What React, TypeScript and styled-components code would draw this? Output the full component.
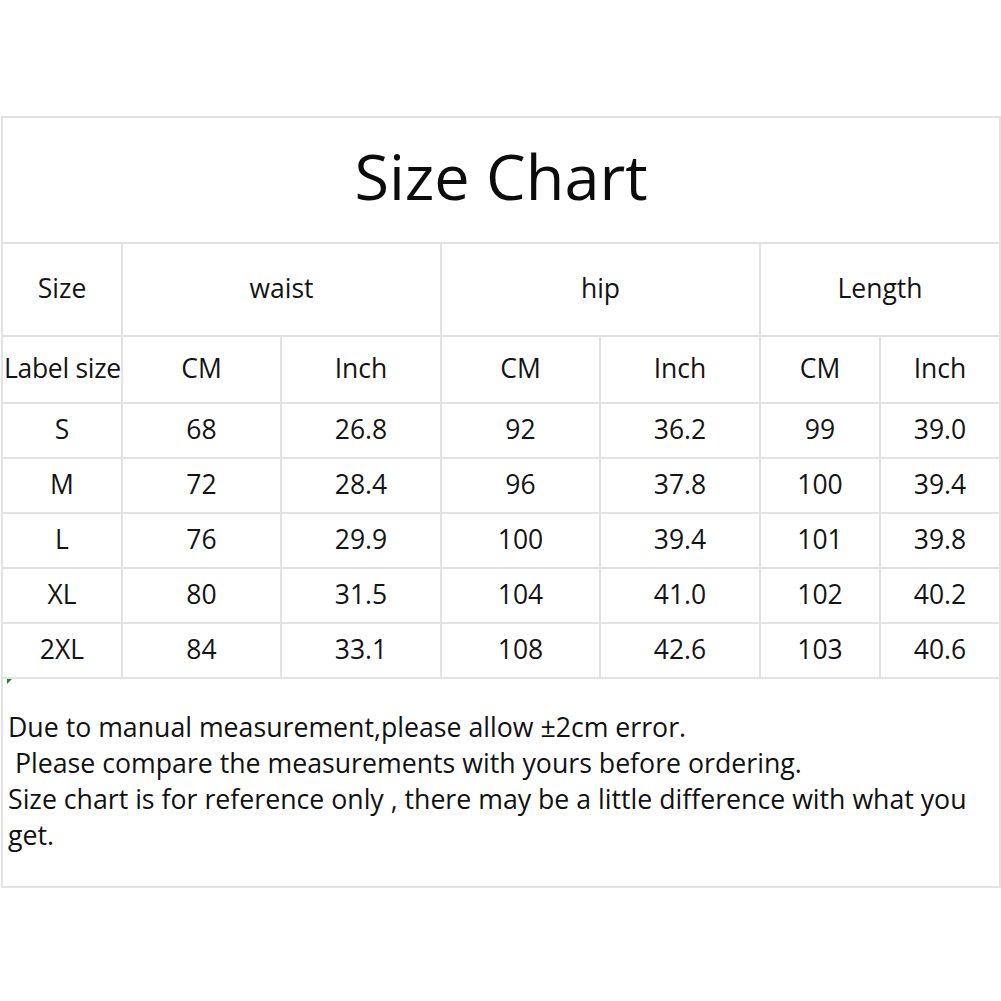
import React from "react";
import styled, { createGlobalStyle } from "styled-components";

const GlobalStyle = createGlobalStyle`
    html, body {
        margin: 0;
        padding: 0;
        background: #ffffff;
    }
    body {
        font-family: "Open Sans", "Noto Sans", sans-serif;
        color: #111111;
    }
`;

const rows = [
    ["S", "68", "26.8", "92", "36.2", "99", "39.0"],
    ["M", "72", "28.4", "96", "37.8", "100", "39.4"],
    ["L", "76", "29.9", "100", "39.4", "101", "39.8"],
    ["XL", "80", "31.5", "104", "41.0", "102", "40.2"],
    ["2XL", "84", "33.1", "108", "42.6", "103", "40.6"],
];

const colWidths = [120, 159, 160, 159, 160, 120, 120];

const App = () => {
    return (
        <Page>
            <GlobalStyle />
            <Chart>
                <colgroup>
                    {colWidths.map((w, i) => (
                        <col key={i} style={{ width: w }} />
                    ))}
                </colgroup>
                <tbody>
                    <TitleRow>
                        <td colSpan={7}>Size Chart</td>
                    </TitleRow>
                    <HeadRow>
                        <td>Size</td>
                        <td colSpan={2}>waist</td>
                        <td colSpan={2}>hip</td>
                        <td colSpan={2}>Length</td>
                    </HeadRow>
                    <SubRow>
                        <LabelCell>Label size</LabelCell>
                        <td>CM</td>
                        <td>Inch</td>
                        <td>CM</td>
                        <td>Inch</td>
                        <td>CM</td>
                        <td>Inch</td>
                    </SubRow>
                    {rows.map(r => (
                        <DataRow key={r[0]}>
                            {r.map((v, i) => (
                                <td key={i}>{v}</td>
                            ))}
                        </DataRow>
                    ))}
                    <NoteRow>
                        <td colSpan={7}>
                            <Mark />
                            <Note>Due to manual measurement,please allow ±2cm error.</Note>
                            <Note>&nbsp;Please compare the measurements with yours before ordering.</Note>
                            <Note>Size chart is for reference only , there may be a little difference with what you</Note>
                            <Note>get.</Note>
                        </td>
                    </NoteRow>
                </tbody>
            </Chart>
        </Page>
    );
};

const Page = styled.div`
    width: 1001px;
    height: 1001px;
    padding-top: 116px;
    padding-left: 1px;
    box-sizing: border-box;
    overflow: hidden;
`;

const Chart = styled.table`
    border-collapse: collapse;
    table-layout: fixed;
    width: 1000px;
    td {
        border: 2px solid #e2e2e2;
        padding: 0 0 4px;
        text-align: center;
        vertical-align: middle;
        font-size: 26.5px;
        color: #141414;
        white-space: nowrap;
    }
`;

const TitleRow = styled.tr`
    height: 126px;
    td {
        font-size: 63px;
        color: #0c0c0c;
        padding: 0 0 10px;
    }
`;

const HeadRow = styled.tr`
    height: 93px;
`;

const SubRow = styled.tr`
    height: 67px;
`;

const LabelCell = styled.td`
    && {
        text-align: left;
        padding-left: 1px;
        letter-spacing: -0.3px;
        overflow: visible;
    }
`;

const DataRow = styled.tr`
    height: 55px;
`;

const NoteRow = styled.tr`
    height: 209px;
    td {
        position: relative;
        text-align: left;
        vertical-align: top;
        padding: 30px 0 0 5px;
    }
`;

const Note = styled.div`
    font-size: 26.7px;
    line-height: 36px;
    color: #111111;
    white-space: pre;
`;

const Mark = styled.span`
    position: absolute;
    left: 4px;
    top: 0;
    width: 0;
    height: 0;
    border-top: 5px solid #1f7a3a;
    border-right: 5px solid transparent;
`;

export default App;
